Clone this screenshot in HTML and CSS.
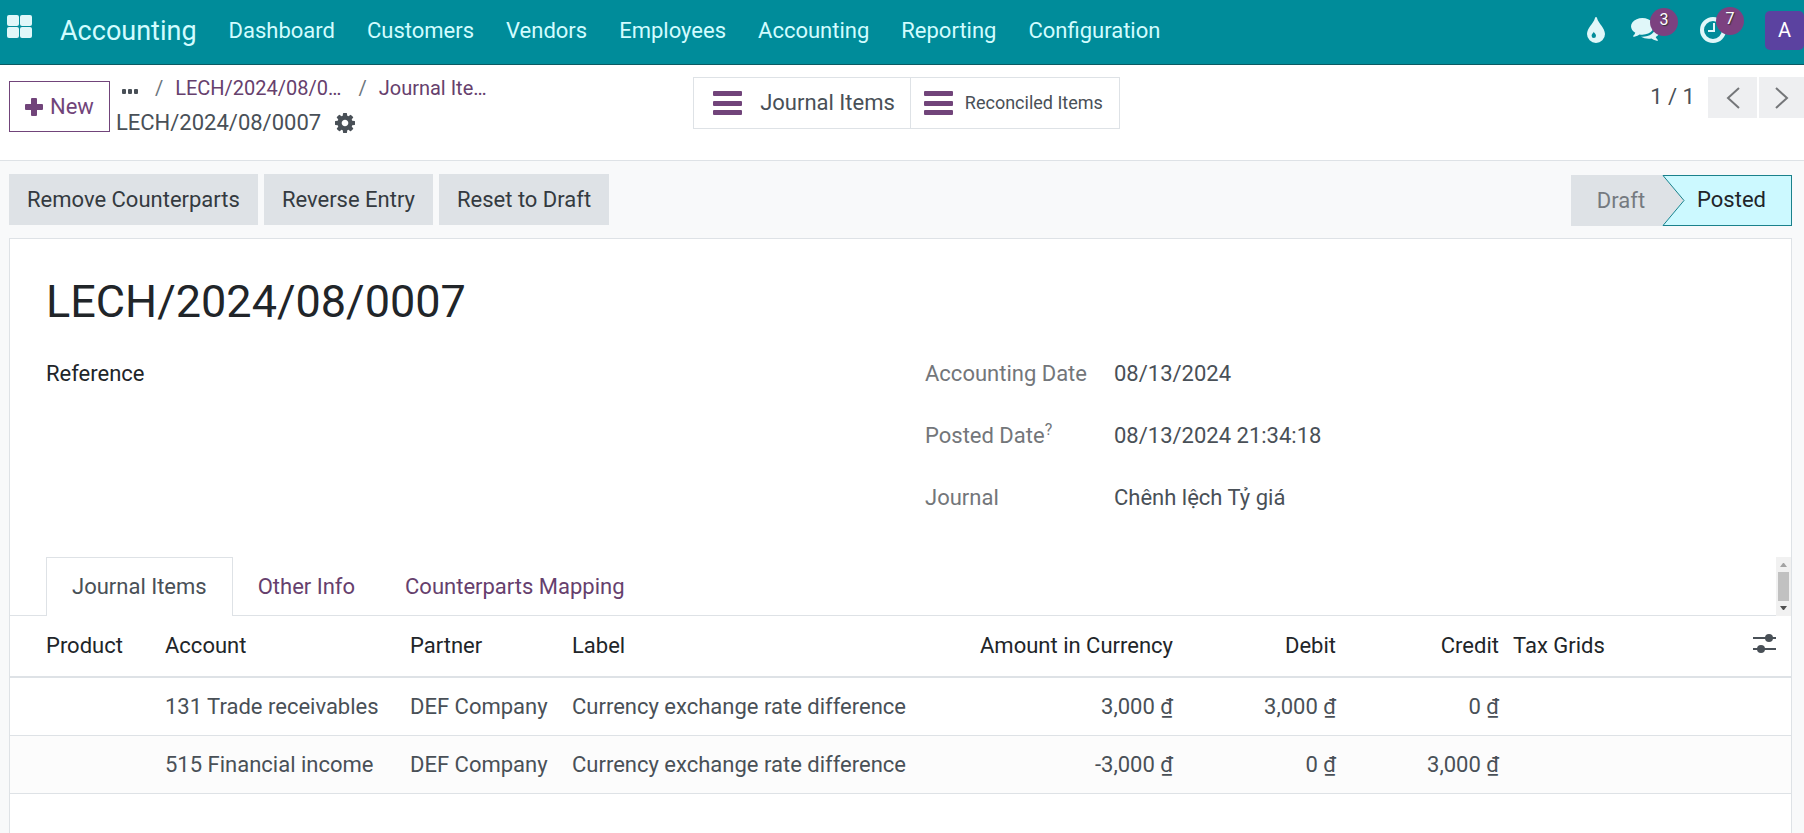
FILE: index.html
```html
<!DOCTYPE html>
<html lang="en">
<head>
    <meta charset="UTF-8">
    <meta name="viewport" content="width=device-width, initial-scale=1.0">
    <title>LECH/2024/08/0007</title>
    <link rel="stylesheet" href="styles.css">
</head>
<body>

    <header class="navbar">
        <button class="apps" aria-label="Home menu">
            <svg width="25" height="23" viewBox="0 0 25 23" fill="currentColor">
                <rect x="0" y="0" width="12" height="11" rx="2"/>
                <rect x="13" y="0" width="12" height="11" rx="2"/>
                <rect x="0" y="12" width="12" height="11" rx="2"/>
                <rect x="13" y="12" width="12" height="11" rx="2"/>
            </svg>
        </button>
        <a class="brand" href="#">Accounting</a>
        <nav class="menu">
            <a href="#">Dashboard</a>
            <a href="#">Customers</a>
            <a href="#">Vendors</a>
            <a href="#">Employees</a>
            <a href="#">Accounting</a>
            <a href="#">Reporting</a>
            <a href="#">Configuration</a>
        </nav>
        <div class="systray">
            <button class="tray-btn" aria-label="Theme">
                <svg width="18" height="26" viewBox="0 0 18 26" fill="currentColor" fill-rule="evenodd">
                    <path d="M9 0C9.500 0 9.900 .4 10.100 1.200C11.400 6.200 18 11.200 18 17A9 9 0 0 1 0 17C0 11.200 6.600 6.200 7.900 1.200C8.100 .4 8.500 0 9 0ZM6.800 14.800C6.400 16.200 4.600 17 4.600 18.800A2.200 2.300 0 0 0 9 18.800C9 17 7.200 16.200 6.800 14.800Z"/>
                </svg>
            </button>
            <button class="tray-btn" aria-label="Messages">
                <svg width="29" height="25" viewBox="0 0 1792 1536" fill="currentColor">
                    <path d="M1408 512q0 139-94 257t-256.500 186.500-353.500 68.500q-86 0-176-16-124 88-278 128-36 9-86 16h-3q-11 0-20.500-8t-11.500-21q-1-3-1-6.500t.5-6.500 2-6l2.500-5 3.500-5.500 4-5 4.500-5 4-4.500q5-6 23-25t26-29.500 22.500-29 25-38.500 20.500-44q-124-72-195-177t-71-224q0-139 94-257t256.500-186.500 353.500-68.500 353.500 68.500 256.500 186.500 94 257zm384 256q0 120-71 224.500t-195 176.500q10 24 20.500 44t25 38.500 22.500 29 26 29.500 23 25q1 1 4 4.500t4.500 5 4 5 3.500 5.500l2.500 5 2 6 .5 6.500-1 6.500q-3 14-13 22t-22 7q-50-7-86-16-154-40-278-128-90 16-176 16-271 0-472-132 58 4 88 4 161 0 309-45t264-129q125-92 192-212t67-254q0-77-23-152 129 71 204 178t75 230z"/>
                </svg>
                <span class="badge">3</span>
            </button>
            <button class="tray-btn" aria-label="Activities">
                <svg width="26" height="26" viewBox="0 0 26 26" fill="none" stroke="currentColor">
                    <circle cx="13" cy="13" r="11" stroke-width="4"/>
                    <path d="M14 6V14H8" stroke-width="2"/>
                </svg>
                <span class="badge">7</span>
            </button>
            <button class="avatar" aria-label="User menu">A</button>
        </div>
    </header>

    <section class="control-panel">
        <div class="panel-left">
            <button class="btn-new">
                <svg width="18" height="18" viewBox="0 0 18 18" fill="currentColor">
                    <path d="M7 0H11Q12 0 12 1V6H17Q18 6 18 7V11Q18 12 17 12H12V17Q12 18 11 18H7Q6 18 6 17V12H1Q0 12 0 11V7Q0 6 1 6H6V1Q6 0 7 0Z"/>
                </svg>
                New
            </button>
            <div class="crumbs">
                <nav class="crumb-trail" aria-label="Breadcrumb">
                    <button class="dots" aria-label="More">
                        <svg width="16" height="5" viewBox="0 0 16 5" fill="currentColor">
                            <rect x="0" y="0" width="4" height="5" rx="1"/>
                            <rect x="6" y="0" width="4" height="5" rx="1"/>
                            <rect x="12" y="0" width="4" height="5" rx="1"/>
                        </svg>
                    </button>
                    <span class="slash">/</span>
                    <a href="#">LECH/2024/08/0…</a>
                    <span class="slash slash-wide">/</span>
                    <a href="#">Journal Ite…</a>
                </nav>
                <div class="crumb-current">
                    <span>LECH/2024/08/0007</span>
                    <button class="gear" aria-label="Actions">
                        <svg width="20" height="20" viewBox="0 0 1536 1536" fill="currentColor">
                            <path d="M1024 768q0-106-75-181t-181-75-181 75-75 181 75 181 181 75 181-75 75-181zm512-109v222q0 12-8 23t-20 13l-185 28q-19 54-39 91 35 50 107 138 10 12 10 25t-9 23q-27 37-99 108t-94 71q-12 0-26-9l-138-108q-44 23-91 38-16 136-29 186-7 28-36 28h-222q-14 0-24.500-8.500t-11.500-21.500l-28-184q-49-16-90-37l-141 107q-10 9-25 9-14 0-25-11-126-114-165-168-7-10-7-23 0-12 8-23 15-21 51-66.500t54-70.500q-27-50-41-99l-183-27q-13-2-21-12.500t-8-23.500v-222q0-12 8-23t19-13l186-28q14-46 39-92-40-57-107-138-10-12-10-24 0-10 9-23 26-36 98.500-107.500t94.500-71.500q13 0 26 10l138 107q44-23 91-38 16-136 29-186 7-28 36-28h222q14 0 24.500 8.500t11.500 21.500l28 184q49 16 90 37l142-107q9-9 24-9 13 0 25 10 129 119 165 170 7 8 7 22 0 12-8 23-15 21-51 66.500t-54 70.500q26 50 41 98l183 28q13 2 21 12.500t8 23.500z"/>
                        </svg>
                    </button>
                </div>
            </div>
        </div>
        <div class="stat-buttons">
            <button class="stat">
                <svg width="29" height="24" viewBox="0 0 29 24" fill="currentColor">
                    <rect x="0" y="0" width="29" height="5" rx="1"/>
                    <rect x="0" y="10" width="29" height="5" rx="1"/>
                    <rect x="0" y="19" width="29" height="5" rx="1"/>
                </svg>
                Journal Items
            </button>
            <button class="stat stat-small">
                <svg width="29" height="24" viewBox="0 0 29 24" fill="currentColor">
                    <rect x="0" y="0" width="29" height="5" rx="1"/>
                    <rect x="0" y="10" width="29" height="5" rx="1"/>
                    <rect x="0" y="19" width="29" height="5" rx="1"/>
                </svg>
                Reconciled Items
            </button>
        </div>
        <div class="pager">
            <span class="pager-count">1 / 1</span>
            <button class="pager-btn" aria-label="Previous">
                <svg width="14" height="22" viewBox="0 0 14 22" fill="none" stroke="currentColor" stroke-width="2">
                    <path d="M13 1L2 11L13 21"/>
                </svg>
            </button>
            <button class="pager-btn" aria-label="Next">
                <svg width="14" height="22" viewBox="0 0 14 22" fill="none" stroke="currentColor" stroke-width="2">
                    <path d="M1 1L12 11L1 21"/>
                </svg>
            </button>
        </div>
    </section>

    <main class="content">
        <div class="statusbar">
            <div class="actions">
                <button class="btn">Remove Counterparts</button>
                <button class="btn">Reverse Entry</button>
                <button class="btn">Reset to Draft</button>
            </div>
            <div class="status">
                <button class="step">Draft</button>
                <button class="step step-active">
                    <svg class="step-arrow" width="23" height="51" viewBox="0 0 23 51">
                        <path d="M0 0H23V51H0L22 25Z" fill="#ccf9ff"/>
                        <path d="M23 .5H1L22 25.500L1 50.500H23" fill="none" stroke="#1a818c"/>
                    </svg>
                    <span class="step-label">Posted</span>
                </button>
            </div>
        </div>

        <div class="sheet">
            <h1>LECH/2024/08/0007</h1>

            <div class="groups">
                <div class="group">
                    <span class="ref-label">Reference</span>
                </div>
                <dl class="group fields">
                    <dt>Accounting Date</dt>
                    <dd>08/13/2024</dd>
                    <dt>Posted Date<sup>?</sup></dt>
                    <dd>08/13/2024 21:34:18</dd>
                    <dt>Journal</dt>
                    <dd>Chênh lệch Tỷ giá</dd>
                </dl>
            </div>

            <div class="tabs">
                <button class="tab tab-active">Journal Items</button>
                <button class="tab">Other Info</button>
                <button class="tab">Counterparts Mapping</button>
                <div class="scrollbar">
                    <svg width="7" height="4" viewBox="0 0 7 4"><path d="M0 4L3 0H4L7 4Z" fill="#a3a3a3"/></svg>
                    <span class="thumb"></span>
                    <svg width="7" height="4" viewBox="0 0 7 4"><path d="M0 0L3 4H4L7 0Z" fill="#505050"/></svg>
                </div>
            </div>

            <table class="lines">
                <colgroup>
                    <col class="col-product">
                    <col class="col-account">
                    <col class="col-partner">
                    <col class="col-label">
                    <col class="col-currency">
                    <col class="col-amount">
                    <col class="col-amount">
                    <col>
                    <col class="col-options">
                </colgroup>
                <thead>
                    <tr>
                        <th>Product</th>
                        <th>Account</th>
                        <th>Partner</th>
                        <th>Label</th>
                        <th class="num">Amount in Currency</th>
                        <th class="num">Debit</th>
                        <th class="num">Credit</th>
                        <th>Tax Grids</th>
                        <th class="options">
                            <button aria-label="Optional columns">
                                <svg width="23" height="20" viewBox="0 0 23 20" fill="currentColor">
                                    <rect x="0" y="4" width="23" height="2"/>
                                    <circle cx="16" cy="5" r="4"/>
                                    <rect x="0" y="15" width="23" height="2"/>
                                    <circle cx="8" cy="16" r="4"/>
                                </svg>
                            </button>
                        </th>
                    </tr>
                </thead>
                <tbody>
                    <tr>
                        <td></td>
                        <td>131 Trade receivables</td>
                        <td>DEF Company</td>
                        <td>Currency exchange rate difference</td>
                        <td class="num">3,000 ₫</td>
                        <td class="num">3,000 ₫</td>
                        <td class="num">0 ₫</td>
                        <td></td>
                        <td></td>
                    </tr>
                    <tr>
                        <td></td>
                        <td>515 Financial income</td>
                        <td>DEF Company</td>
                        <td>Currency exchange rate difference</td>
                        <td class="num">-3,000 ₫</td>
                        <td class="num">0 ₫</td>
                        <td class="num">3,000 ₫</td>
                        <td></td>
                        <td></td>
                    </tr>
                </tbody>
            </table>
        </div>
    </main>

</body>
</html>
```

FILE: styles.css
```css
* { box-sizing: border-box; }
body {
    margin: 0;
    min-height: 100vh;
    display: flex;
    flex-direction: column;
    font-family: Roboto, "Liberation Sans", sans-serif;
    font-size: 22px;
    line-height: 32px;
    color: #495057;
    background-color: #fff;
}
button { font: inherit; color: inherit; background: none; border: 0; padding: 0; white-space: nowrap; }
a { color: #66406d; text-decoration: none; white-space: nowrap; }
svg { display: block; flex: none; }

/* top bar */
.navbar {
    display: flex;
    align-items: center;
    height: 65px;
    padding: 0 0 4px 7px;
    background-color: #008c9a;
    border-bottom: 1px solid #0b5a63;
}
.apps { color: #e0f7f9; margin: 0 28px 7px 0; }
.navbar a { color: #d2fcff; margin-top: 2px; }
.navbar .brand { font-size: 27px; margin-right: 32px; }
.menu { display: flex; gap: 32px; }
.systray { display: flex; align-items: center; margin-left: auto; color: #e0f7f9; }
.tray-btn { position: relative; margin-right: 26px; }
.tray-btn:nth-child(2) { margin-right: 40px; }
.tray-btn:nth-child(3) { margin-right: 39px; }
.badge {
    position: absolute;
    right: -18px;
    top: -10px;
    width: 28px;
    height: 28px;
    border-radius: 50%;
    background-color: #7c4180;
    color: #fff;
    font-size: 16px;
    line-height: 23px;
    text-shadow: 1px 1px 1px #333;
}
.avatar { width: 39px; height: 39px; border-radius: 5px; background-color: #5b42a0; color: #fff; font-size: 20px; }

/* breadcrumb row */
.control-panel {
    display: grid;
    grid-template-columns: 1fr auto 1fr;
    align-items: start;
    height: 96px;
    padding: 12px 0 0 9px;
    border-bottom: 1px solid #dee2e6;
}
.panel-left { display: flex; gap: 6px; }
.btn-new {
    display: flex;
    align-items: center;
    gap: 7px;
    height: 51px;
    margin-top: 4px;
    padding: 0 15px;
    border: 1px solid #71447a;
    color: #71447a;
}
.crumbs { margin-top: -6px; }
.crumb-trail { display: flex; align-items: center; font-size: 20px; height: 34px; }
.dots { margin: 6px 17px 0 6px; }
.slash { margin-right: 12px; color: #6c757d; }
.slash-wide { margin-left: 17px; }
.crumb-current { display: flex; align-items: center; gap: 14px; height: 36px; }
.stat-buttons { display: flex; border: 1px solid #dee2e6; height: 52px; }
.stat { display: flex; align-items: center; gap: 18px; padding: 0 15px 0 19px; }
.stat svg { color: #71447a; }
.stat-small { gap: 12px; padding: 0 16px 0 13px; border-left: 1px solid #dee2e6; font-size: 18px; }
.pager { display: flex; justify-content: flex-end; gap: 2px; }
.pager-count { margin: 4px 11px 0 0; }
.pager-btn { display: flex; align-items: center; justify-content: center; width: 49px; height: 41px; background-color: #eeeff1; color: #747679; }
.pager-btn:last-child { width: 45px; }

/* form */
.content { flex: 1; display: flex; flex-direction: column; padding: 13px 12px 0 9px; background-color: #f8f9fa; }
.statusbar { display: flex; justify-content: space-between; height: 64px; }
.actions { display: flex; gap: 6px; }
.btn { height: 51px; padding: 0 18px; background-color: #dee2e6; color: #343a40; }
.status { display: flex; height: 51px; margin-top: 1px; }
.step { padding: 0 17px 0 26px; background-color: #dee2e6; color: #757a80; }
.step-active { display: flex; padding: 0; color: #212529; }
.step-label {
    height: 51px;
    padding: 0 25px 0 12px;
    line-height: 48px;
    background-color: #ccf9ff;
    border: 1px solid #1a818c;
    border-left: 0;
}
.sheet { flex: 1; background-color: #fff; border: 1px solid #dee2e6; border-bottom: 0; }
h1 { margin: 31px 36px 0; font-size: 45px; line-height: 64px; font-weight: 400; color: #212529; }
.groups { display: grid; grid-template-columns: 879px 1fr; margin: 24px 36px 0; }
.ref-label { color: #212529; }
.fields { display: grid; grid-template-columns: 189px 1fr; row-gap: 30px; margin: 0; }
.fields dt { color: #73767a; }
.fields dd { margin: 0; }
sup { font-size: 16px; line-height: 0; }

.tabs { display: flex; height: 59px; margin-top: 43px; padding-left: 36px; box-shadow: inset 0 -1px #dee2e6; }
.tab { padding: 0 25px; color: #66406d; }
.tab-active { background-color: #fff; border: 1px solid #dee2e6; border-bottom: 0; color: #495057; }
.scrollbar {
    display: flex;
    flex-direction: column;
    align-items: center;
    justify-content: space-between;
    width: 15px;
    margin-left: auto;
    padding: 6px 0;
    background-color: #f1f1f1;
}
.thumb { width: 11px; height: 29px; background-color: #c1c1c1; }

/* journal items */
.lines { width: 100%; table-layout: fixed; border-collapse: separate; border-spacing: 0; }
.lines th, .lines td { padding: 0 7px; text-align: left; font-weight: 400; white-space: nowrap; border-bottom: 1px solid #dee2e6; }
.lines th { height: 62px; color: #212529; border-bottom-width: 2px; }
.lines td { height: 58px; }
.lines th:first-child { padding-left: 36px; }
.lines tbody tr:nth-child(even) { background-color: #fcfcfc; }
.lines .num { text-align: right; }
.lines .options { padding: 0 14px; color: #495057; }
.col-product { width: 148px; }
.col-account { width: 245px; }
.col-partner { width: 162px; }
.col-label { width: 380px; }
.col-currency { width: 235px; }
.col-amount { width: 163px; }
.col-options { width: 52px; }
```
